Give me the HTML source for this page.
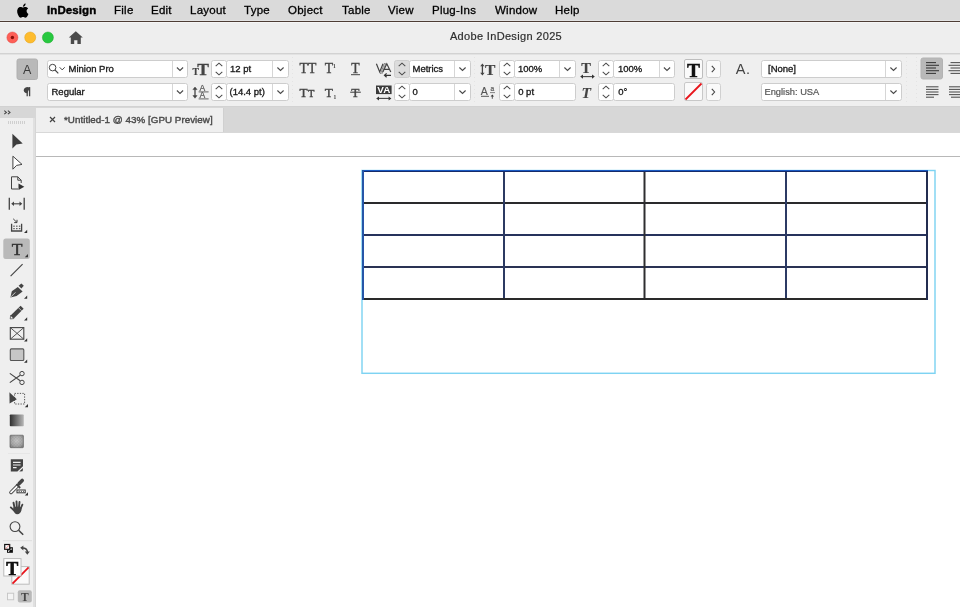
<!DOCTYPE html>
<html><head><meta charset="utf-8">
<style>
*{margin:0;padding:0;box-sizing:border-box}
html,body{width:960px;height:607px;overflow:hidden;background:#fff;font-family:"Liberation Sans",sans-serif;position:relative}
.a{position:absolute;will-change:transform}
#menubar{left:0;top:0;width:960px;height:21px;background:#dadada}
#menubar span{position:absolute;top:2.6px;font-size:11.5px;color:#000;line-height:14px;-webkit-text-stroke:0.3px #000;letter-spacing:0.25px}
#menubar span.b{-webkit-text-stroke:0.4px #000;letter-spacing:0.1px}
#brown{left:0;top:21px;width:960px;height:1px;background:#4e3d35;box-shadow:0 -1px 0 #e3e3e3,0 1px 0 #f6f6f6}
#titlebar{left:0;top:22px;width:960px;height:31px;background:#eeeeee}
#title{left:0;top:30px;width:1012px;text-align:center;font-size:11px;color:#2e2e2e;-webkit-text-stroke:0.2px #2e2e2e;letter-spacing:0.33px}
#sepline{left:0;top:53px;width:960px;height:1px;background:#d2d2d2;border-bottom:1px solid #e2e2e2;height:2px}
#ctrl{left:0;top:55px;width:960px;height:51px;background:#efefef}
#ctrlbot{left:0;top:106px;width:960px;height:1px;background:#d2d2d2}
#tabbar{left:0;top:107px;width:960px;height:26px;background:#d7d7d7}
#panelhdr{left:0;top:107px;width:35px;height:11px;background:#d7d7d7}
#tab{left:36px;top:108px;width:188px;height:24px;background:#efefef;border-right:1px solid #d0d0d0}
#tabtext{left:64px;top:114px;font-size:9.8px;color:#4a4a4a;-webkit-text-stroke:0.4px #4a4a4a;letter-spacing:0.03px}
#toolbar{left:0;top:118px;width:33px;height:489px;background:#efefef}
#tbborder{left:33px;top:118px;width:3px;height:489px;background:#e0e0e0;border-right:1px solid #d6d6d6}
#canvas{left:36px;top:133px;width:924px;height:474px;background:#fff}
#tabline{left:36px;top:132px;width:924px;height:1px;background:#d8d8d8}
#pageline{left:36px;top:156px;width:924px;height:1px;background:#b8b8b8}
</style></head><body>
<div class="a" id="menubar">
  <span class="b" style="left:47px;font-weight:bold">InDesign</span>
  <span style="left:114px">File</span>
  <span style="left:151px">Edit</span>
  <span style="left:190px">Layout</span>
  <span style="left:244px">Type</span>
  <span style="left:288px">Object</span>
  <span style="left:342px">Table</span>
  <span style="left:388px">View</span>
  <span style="left:432px">Plug-Ins</span>
  <span style="left:495px">Window</span>
  <span style="left:555px">Help</span>
</div>
<div class="a" id="titlebar"></div>
<div class="a" id="brown"></div>
<svg class="a" style="left:0;top:0" width="100" height="54" viewBox="0 0 100 54"><circle cx="12.4" cy="37.5" r="5.5" fill="#fe5f57" stroke="#e0443e" stroke-width="0.5"/><circle cx="12.4" cy="37.5" r="1.7" fill="#8a0f0a"/><circle cx="30.2" cy="37.5" r="5.5" fill="#febc2e" stroke="#e1a116" stroke-width="0.5"/><circle cx="47.9" cy="37.5" r="5.5" fill="#28c840" stroke="#1aab29" stroke-width="0.5"/><path d="M75.8,31.2 L68.8,37.6 L70.8,37.6 L70.8,44 L74.2,44 L74.2,40.2 L77.4,40.2 L77.4,44 L80.8,44 L80.8,37.6 L82.8,37.6 Z" fill="#4a4a4a"/><g transform="translate(15.2,2.2) scale(0.98)" fill="#000"><path d="M11.6,9.1 C11.6,7.3 13.1,6.4 13.2,6.4 C12.3,5.1 11,4.9 10.5,4.9 C9.4,4.8 8.4,5.5 7.8,5.5 C7.3,5.5 6.4,4.9 5.5,4.9 C4.3,4.9 3.2,5.6 2.6,6.7 C1.3,8.9 2.3,12.2 3.5,14 C4.1,14.9 4.8,15.8 5.7,15.8 C6.6,15.8 6.9,15.2 8,15.2 C9.1,15.2 9.4,15.8 10.3,15.8 C11.3,15.8 11.9,14.9 12.5,14 C13.2,13 13.5,12 13.5,12 C13.5,12 11.6,11.2 11.6,9.1 Z"/><path d="M9.9,3.6 C10.4,3 10.7,2.2 10.6,1.4 C9.9,1.4 9.1,1.9 8.6,2.5 C8.2,3 7.8,3.8 7.9,4.6 C8.7,4.6 9.4,4.2 9.9,3.6 Z"/></g></svg>
<div class="a" id="title">Adobe InDesign 2025</div>
<div class="a" id="sepline"></div>
<div class="a" id="ctrl"></div>
<div class="a" id="ctrlbot"></div>
<svg class="a" style="left:0;top:0" width="960" height="110" viewBox="0 0 960 110"><rect x="17" y="59" width="20.5" height="20.5" rx="2" fill="#b9b9b9" stroke="#b0b0b0" stroke-width="1"/><text x="27.2" y="74" text-anchor="middle" font-family='"Liberation Sans", sans-serif' font-size="12.5" fill="#3a3a3a">A</text><path d="M29.6,87.2 L29.6,96.2 M27.2,87.2 L27.2,96.2" stroke="#444" stroke-width="1.3"/><path d="M30.2,87.2 L27.2,87.2 C24.8,87.2 23.8,88.6 23.8,90.2 C23.8,91.8 24.8,93.2 27.2,93.2 Z" fill="#444"/><rect x="47.5" y="60.5" width="140.0" height="17.0" rx="2" fill="#fff" stroke="#cdcdcd" stroke-width="1"/><line x1="172.5" y1="61.0" x2="172.5" y2="77.0" stroke="#d6d6d6" stroke-width="1"/><path d="M176.9,67.5 L180.0,70.5 L183.1,67.5" fill="none" stroke="#4a4a4a" stroke-width="1.1"/><text x="68.5" y="71.8" font-family='"Liberation Sans", sans-serif' font-size="9.5" fill="#1a1a1a" stroke="#1a1a1a" stroke-width="0.33">Minion Pro</text><circle cx="52.6" cy="67.6" r="3.3" fill="none" stroke="#444" stroke-width="1"/><line x1="55" y1="70" x2="58.3" y2="73.3" stroke="#444" stroke-width="1.1"/><path d="M59.7,67.3 L62.2,69.89999999999999 L64.7,67.3" fill="none" stroke="#444" stroke-width="1"/><rect x="47.5" y="83.5" width="140.0" height="17.0" rx="2" fill="#fff" stroke="#cdcdcd" stroke-width="1"/><line x1="172.5" y1="84.0" x2="172.5" y2="100.0" stroke="#d6d6d6" stroke-width="1"/><path d="M176.9,90.5 L180.0,93.5 L183.1,90.5" fill="none" stroke="#4a4a4a" stroke-width="1.1"/><text x="51.5" y="94.8" font-family='"Liberation Sans", sans-serif' font-size="9.5" fill="#1a1a1a" stroke="#1a1a1a" stroke-width="0.33">Regular</text><text x="192.6" y="75.2" font-family='"Liberation Serif", serif' font-size="9.6" font-weight="bold" fill="#444" stroke="#444" stroke-width="0.2">T</text><text x="197.2" y="75.2" font-family='"Liberation Serif", serif' font-size="17.5" font-weight="bold" fill="#444" stroke="#444" stroke-width="0.3">T</text><rect x="211.5" y="60.5" width="15.0" height="17.0" rx="2" fill="#fff" stroke="#cdcdcd" stroke-width="1"/><path d="M215.7,66.05 L219.0,63.14999999999999 L222.3,66.05" fill="none" stroke="#4a4a4a" stroke-width="1.05"/><path d="M215.7,71.95 L219.0,74.85000000000001 L222.3,71.95" fill="none" stroke="#4a4a4a" stroke-width="1.05"/><rect x="226.5" y="60.5" width="62.0" height="17.0" rx="2" fill="#fff" stroke="#cdcdcd" stroke-width="1"/><line x1="272.5" y1="61.0" x2="272.5" y2="77.0" stroke="#d6d6d6" stroke-width="1"/><path d="M277.4,67.5 L280.5,70.5 L283.6,67.5" fill="none" stroke="#4a4a4a" stroke-width="1.1"/><text x="230" y="71.8" font-family='"Liberation Sans", sans-serif' font-size="9.5" fill="#1a1a1a" stroke="#1a1a1a" stroke-width="0.33">12 pt</text><path d="M195,88.6 L195,96.6" stroke="#444" stroke-width="1.3"/><path d="M192.9,89.6 L195,87 L197.1,89.6 Z M192.9,95.6 L195,98.2 L197.1,95.6 Z" fill="#444" stroke="#444" stroke-width="0.5"/><text x="199.6" y="91.2" font-family='"Liberation Sans", sans-serif' font-size="8.6" fill="#555" stroke="#555" stroke-width="0.2">A</text><text x="199.6" y="98.2" font-family='"Liberation Sans", sans-serif' font-size="8.6" fill="#555" stroke="#555" stroke-width="0.2">A</text><line x1="198.6" y1="91.9" x2="208.6" y2="91.9" stroke="#555" stroke-width="0.9"/><line x1="198.6" y1="98.9" x2="208.6" y2="98.9" stroke="#555" stroke-width="0.9"/><rect x="211.5" y="83.5" width="15.0" height="17.0" rx="2" fill="#fff" stroke="#cdcdcd" stroke-width="1"/><path d="M215.7,89.05 L219.0,86.14999999999999 L222.3,89.05" fill="none" stroke="#4a4a4a" stroke-width="1.05"/><path d="M215.7,94.95 L219.0,97.85000000000001 L222.3,94.95" fill="none" stroke="#4a4a4a" stroke-width="1.05"/><rect x="226.5" y="83.5" width="62.0" height="17.0" rx="2" fill="#fff" stroke="#cdcdcd" stroke-width="1"/><line x1="272.5" y1="84.0" x2="272.5" y2="100.0" stroke="#d6d6d6" stroke-width="1"/><path d="M277.4,90.5 L280.5,93.5 L283.6,90.5" fill="none" stroke="#4a4a4a" stroke-width="1.1"/><text x="229.5" y="94.8" font-family='"Liberation Sans", sans-serif' font-size="9.5" fill="#1a1a1a" stroke="#1a1a1a" stroke-width="0.33">(14.4 pt)</text><line x1="292.5" y1="57" x2="292.5" y2="103" stroke="#e4e4e4" stroke-width="1" stroke-dasharray="1,3"/><line x1="474.5" y1="57" x2="474.5" y2="103" stroke="#e4e4e4" stroke-width="1" stroke-dasharray="1,3"/><line x1="906.5" y1="57" x2="906.5" y2="103" stroke="#e4e4e4" stroke-width="1" stroke-dasharray="1,3"/><line x1="916.5" y1="57" x2="916.5" y2="103" stroke="#e4e4e4" stroke-width="1" stroke-dasharray="1,3"/><text x="299.6" y="72.9" font-family='"Liberation Serif", serif' font-size="13.7" font-weight="normal" fill="#444" stroke="#444" stroke-width="0.35">T</text><text x="307.9" y="72.9" font-family='"Liberation Serif", serif' font-size="13.7" font-weight="normal" fill="#444" stroke="#444" stroke-width="0.35">T</text><text x="324.8" y="72.9" font-family='"Liberation Serif", serif' font-size="13.7" font-weight="normal" fill="#444" stroke="#444" stroke-width="0.35">T</text><text x="333" y="67.6" font-family='"Liberation Serif", serif' font-size="5.5" font-weight="bold" fill="#444">1</text><text x="351.2" y="72.9" font-family='"Liberation Serif", serif' font-size="13.7" font-weight="normal" fill="#444" stroke="#444" stroke-width="0.35">T</text><line x1="351" y1="74.7" x2="360" y2="74.7" stroke="#444" stroke-width="1"/><text x="299.6" y="96.6" font-family='"Liberation Serif", serif' font-size="13.3" font-weight="normal" fill="#444" stroke="#444" stroke-width="0.35">T</text><text x="308.2" y="96.6" font-family='"Liberation Serif", serif' font-size="10" font-weight="normal" fill="#444" stroke="#444" stroke-width="0.45">T</text><text x="324.8" y="96.6" font-family='"Liberation Serif", serif' font-size="13.3" font-weight="normal" fill="#444" stroke="#444" stroke-width="0.35">T</text><text x="333.5" y="98.5" font-family='"Liberation Serif", serif' font-size="5.5" font-weight="bold" fill="#444">1</text><text x="351.2" y="96.9" font-family='"Liberation Serif", serif' font-size="13.3" font-weight="normal" fill="#444" stroke="#444" stroke-width="0.35">T</text><line x1="350.2" y1="92.2" x2="360.8" y2="92.2" stroke="#444" stroke-width="1.1"/><path d="M376.4,63.8 L379.7,72 L383,63.8 M382.8,72 L386.8,63.8 L390.8,72 M384.2,69.4 L389.4,69.4" fill="none" stroke="#444" stroke-width="1.2"/><path d="M384.6,63 L380.4,74 M386,63 L381.8,74" fill="none" stroke="#555" stroke-width="0.7"/><path d="M391,75.3 L384.5,75.3 M386.6,73.4 L384.5,75.3 L386.6,77.2" fill="none" stroke="#333" stroke-width="1.2"/><rect x="394.5" y="60.5" width="15.0" height="17.0" rx="2" fill="#dcdcdc" stroke="#cdcdcd" stroke-width="1"/><path d="M398.7,66.05 L402.0,63.14999999999999 L405.3,66.05" fill="none" stroke="#4a4a4a" stroke-width="1.05"/><path d="M398.7,71.95 L402.0,74.85000000000001 L405.3,71.95" fill="none" stroke="#4a4a4a" stroke-width="1.05"/><rect x="409.5" y="60.5" width="61.0" height="17.0" rx="2" fill="#fff" stroke="#cdcdcd" stroke-width="1"/><line x1="454.5" y1="61.0" x2="454.5" y2="77.0" stroke="#d6d6d6" stroke-width="1"/><path d="M459.4,67.5 L462.5,70.5 L465.6,67.5" fill="none" stroke="#4a4a4a" stroke-width="1.1"/><text x="412.5" y="71.8" font-family='"Liberation Sans", sans-serif' font-size="9.5" fill="#1a1a1a" stroke="#1a1a1a" stroke-width="0.33">Metrics</text><rect x="376" y="85.5" width="15.6" height="8.6" fill="#3a3a3a"/><text x="383.8" y="93.3" text-anchor="middle" font-family='"Liberation Sans", sans-serif' font-size="9.5" font-weight="bold" fill="#fff" textLength="13" lengthAdjust="spacingAndGlyphs">VA</text><path d="M378,98.4 L389.6,98.4" stroke="#444" stroke-width="1.1"/><path d="M376.2,98.4 L379,96.4 L379,100.4 Z M391.4,98.4 L388.6,96.4 L388.6,100.4 Z" fill="#333"/><rect x="394.5" y="83.5" width="15.0" height="17.0" rx="2" fill="#fff" stroke="#cdcdcd" stroke-width="1"/><path d="M398.7,89.05 L402.0,86.14999999999999 L405.3,89.05" fill="none" stroke="#4a4a4a" stroke-width="1.05"/><path d="M398.7,94.95 L402.0,97.85000000000001 L405.3,94.95" fill="none" stroke="#4a4a4a" stroke-width="1.05"/><rect x="409.5" y="83.5" width="61.0" height="17.0" rx="2" fill="#fff" stroke="#cdcdcd" stroke-width="1"/><line x1="454.5" y1="84.0" x2="454.5" y2="100.0" stroke="#d6d6d6" stroke-width="1"/><path d="M459.4,90.5 L462.5,93.5 L465.6,90.5" fill="none" stroke="#4a4a4a" stroke-width="1.1"/><text x="412.5" y="94.8" font-family='"Liberation Sans", sans-serif' font-size="9.5" fill="#1a1a1a" stroke="#1a1a1a" stroke-width="0.33">0</text><path d="M482.4,65.5 L482.4,73.5" stroke="#444" stroke-width="1.3"/><path d="M480.2,66.2 L482.4,63.4 L484.6,66.2 Z M480.2,72.8 L482.4,75.6 L484.6,72.8 Z" fill="#444"/><text x="485" y="75.3" font-family='"Liberation Serif", serif' font-size="15.5" font-weight="bold" fill="#444" stroke="#444" stroke-width="0.2">T</text><rect x="499.5" y="60.5" width="15.0" height="17.0" rx="2" fill="#fff" stroke="#cdcdcd" stroke-width="1"/><path d="M503.7,66.05 L507.0,63.14999999999999 L510.3,66.05" fill="none" stroke="#4a4a4a" stroke-width="1.05"/><path d="M503.7,71.95 L507.0,74.85000000000001 L510.3,71.95" fill="none" stroke="#4a4a4a" stroke-width="1.05"/><rect x="514.5" y="60.5" width="61.0" height="17.0" rx="2" fill="#fff" stroke="#cdcdcd" stroke-width="1"/><line x1="559.5" y1="61.0" x2="559.5" y2="77.0" stroke="#d6d6d6" stroke-width="1"/><path d="M564.4,67.5 L567.5,70.5 L570.6,67.5" fill="none" stroke="#4a4a4a" stroke-width="1.1"/><text x="518" y="71.8" font-family='"Liberation Sans", sans-serif' font-size="9.5" fill="#1a1a1a" stroke="#1a1a1a" stroke-width="0.33">100%</text><text x="480.8" y="94.7" font-family='"Liberation Sans", sans-serif' font-size="10.5" fill="#555" stroke="#555" stroke-width="0.15">A</text><line x1="481" y1="96.3" x2="489" y2="96.3" stroke="#555" stroke-width="1"/><text x="490.4" y="91.1" font-family='"Liberation Sans", sans-serif' font-size="6.5" fill="#555" stroke="#555" stroke-width="0.2">a</text><line x1="490" y1="92.6" x2="495" y2="92.6" stroke="#666" stroke-width="0.8"/><path d="M492.3,98.8 L492.3,96" stroke="#444" stroke-width="0.9"/><path d="M490.6,96.6 L492.3,94.4 L494,96.6 Z" fill="#333"/><rect x="499.5" y="83.5" width="15.0" height="17.0" rx="2" fill="#fff" stroke="#cdcdcd" stroke-width="1"/><path d="M503.7,89.05 L507.0,86.14999999999999 L510.3,89.05" fill="none" stroke="#4a4a4a" stroke-width="1.05"/><path d="M503.7,94.95 L507.0,97.85000000000001 L510.3,94.95" fill="none" stroke="#4a4a4a" stroke-width="1.05"/><rect x="514.5" y="83.5" width="61.0" height="17.0" rx="2" fill="#fff" stroke="#cdcdcd" stroke-width="1"/><text x="518.2" y="94.8" font-family='"Liberation Sans", sans-serif' font-size="9.5" fill="#1a1a1a" stroke="#1a1a1a" stroke-width="0.33">0 pt</text><text x="581.2" y="73.4" font-family='"Liberation Serif", serif' font-size="14.5" font-weight="bold" fill="#444" stroke="#444" stroke-width="0.2">T</text><path d="M582,76.6 L593,76.6" stroke="#444" stroke-width="1.1"/><path d="M580.2,76.6 L583,74.5 L583,78.7 Z M594.8,76.6 L592,74.5 L592,78.7 Z" fill="#333"/><rect x="598.5" y="60.5" width="15.0" height="17.0" rx="2" fill="#fff" stroke="#cdcdcd" stroke-width="1"/><path d="M602.7,66.05 L606.0,63.14999999999999 L609.3,66.05" fill="none" stroke="#4a4a4a" stroke-width="1.05"/><path d="M602.7,71.95 L606.0,74.85000000000001 L609.3,71.95" fill="none" stroke="#4a4a4a" stroke-width="1.05"/><rect x="613.5" y="60.5" width="61.0" height="17.0" rx="2" fill="#fff" stroke="#cdcdcd" stroke-width="1"/><line x1="659.5" y1="61.0" x2="659.5" y2="77.0" stroke="#d6d6d6" stroke-width="1"/><path d="M663.9,67.5 L667.0,70.5 L670.1,67.5" fill="none" stroke="#4a4a4a" stroke-width="1.1"/><text x="618" y="71.8" font-family='"Liberation Sans", sans-serif' font-size="9.5" fill="#1a1a1a" stroke="#1a1a1a" stroke-width="0.33">100%</text><text x="581.5" y="97.5" font-family='"Liberation Serif", serif' font-size="15.5" font-style="italic" font-weight="bold" fill="#444" stroke="#444" stroke-width="0.1">T</text><rect x="598.5" y="83.5" width="15.0" height="17.0" rx="2" fill="#fff" stroke="#cdcdcd" stroke-width="1"/><path d="M602.7,89.05 L606.0,86.14999999999999 L609.3,89.05" fill="none" stroke="#4a4a4a" stroke-width="1.05"/><path d="M602.7,94.95 L606.0,97.85000000000001 L609.3,94.95" fill="none" stroke="#4a4a4a" stroke-width="1.05"/><rect x="613.5" y="83.5" width="61.0" height="17.0" rx="2" fill="#fff" stroke="#cdcdcd" stroke-width="1"/><text x="618.2" y="94.8" font-family='"Liberation Sans", sans-serif' font-size="9.5" fill="#1a1a1a" stroke="#1a1a1a" stroke-width="0.33">0&#176;</text><rect x="684.5" y="59.5" width="18.0" height="19.0" rx="1.5" fill="#fafafa" stroke="#bdbdbd" stroke-width="1"/><text x="693.6" y="77" text-anchor="middle" font-family='"Liberation Serif", serif' font-size="19.5" font-weight="bold" fill="#111" stroke="#111" stroke-width="0.5">T</text><rect x="684.5" y="82.5" width="18.0" height="18.0" rx="1.5" fill="#fafafa" stroke="#c8c8c8" stroke-width="1"/><line x1="685.5" y1="99.5" x2="701.5" y2="83.5" stroke="#e8141b" stroke-width="1.8"/><rect x="706.5" y="60.5" width="14.0" height="17.0" rx="2" fill="#fafafa" stroke="#d0d0d0" stroke-width="1"/><path d="M711.8,65.8 L714.6,69.0 L711.8,72.2" fill="none" stroke="#444" stroke-width="1.1"/><rect x="706.5" y="83.5" width="14.0" height="17.0" rx="2" fill="#fafafa" stroke="#d0d0d0" stroke-width="1"/><path d="M711.8,88.8 L714.6,92.0 L711.8,95.2" fill="none" stroke="#444" stroke-width="1.1"/><text x="735.8" y="74" font-family='"Liberation Sans", sans-serif' font-size="14.5" fill="#444" letter-spacing="0.5">A.</text><rect x="761.5" y="60.5" width="140.0" height="17.0" rx="2" fill="#fff" stroke="#cdcdcd" stroke-width="1"/><line x1="885.5" y1="61.0" x2="885.5" y2="77.0" stroke="#d6d6d6" stroke-width="1"/><path d="M890.4,67.5 L893.5,70.5 L896.6,67.5" fill="none" stroke="#4a4a4a" stroke-width="1.1"/><text x="768" y="71.8" font-family='"Liberation Sans", sans-serif' font-size="9.5" fill="#1a1a1a" stroke="#1a1a1a" stroke-width="0.33">[None]</text><rect x="761.5" y="83.5" width="140.0" height="17.0" rx="2" fill="#fff" stroke="#cdcdcd" stroke-width="1"/><line x1="885.5" y1="84.0" x2="885.5" y2="100.0" stroke="#d6d6d6" stroke-width="1"/><path d="M890.4,90.5 L893.5,93.5 L896.6,90.5" fill="none" stroke="#4a4a4a" stroke-width="1.1"/><text x="764.5" y="94.8" font-family='"Liberation Sans", sans-serif' font-size="9.3" fill="#555" stroke="#555" stroke-width="0.2">English: USA</text><rect x="921" y="58" width="21.5" height="21" rx="2" fill="#b9b9b9" stroke="#b3b3b3" stroke-width="1"/><line x1="926" y1="62.6" x2="936" y2="62.6" stroke="#3a3a3a" stroke-width="1.1"/><line x1="950.5" y1="62.6" x2="960" y2="62.6" stroke="#555" stroke-width="1.1"/><line x1="926" y1="65.3" x2="939" y2="65.3" stroke="#3a3a3a" stroke-width="1.1"/><line x1="948.5" y1="65.3" x2="960" y2="65.3" stroke="#555" stroke-width="1.1"/><line x1="926" y1="68" x2="936" y2="68" stroke="#3a3a3a" stroke-width="1.1"/><line x1="950.5" y1="68" x2="960" y2="68" stroke="#555" stroke-width="1.1"/><line x1="926" y1="70.7" x2="939" y2="70.7" stroke="#3a3a3a" stroke-width="1.1"/><line x1="948.5" y1="70.7" x2="960" y2="70.7" stroke="#555" stroke-width="1.1"/><line x1="926" y1="73.4" x2="936" y2="73.4" stroke="#3a3a3a" stroke-width="1.1"/><line x1="950.5" y1="73.4" x2="960" y2="73.4" stroke="#555" stroke-width="1.1"/><line x1="926" y1="86.8" x2="938.5" y2="86.8" stroke="#555" stroke-width="1.1"/><line x1="949" y1="86.8" x2="960" y2="86.8" stroke="#555" stroke-width="1.1"/><line x1="926" y1="89.4" x2="938.5" y2="89.4" stroke="#555" stroke-width="1.1"/><line x1="949" y1="89.4" x2="960" y2="89.4" stroke="#555" stroke-width="1.1"/><line x1="926" y1="92" x2="938.5" y2="92" stroke="#555" stroke-width="1.1"/><line x1="949" y1="92" x2="960" y2="92" stroke="#555" stroke-width="1.1"/><line x1="926" y1="94.6" x2="938.5" y2="94.6" stroke="#555" stroke-width="1.1"/><line x1="949" y1="94.6" x2="960" y2="94.6" stroke="#555" stroke-width="1.1"/><line x1="926" y1="97.2" x2="934" y2="97.2" stroke="#555" stroke-width="1.1"/><line x1="951" y1="97.2" x2="960" y2="97.2" stroke="#555" stroke-width="1.1"/></svg>
<div class="a" id="tabbar"></div>
<div class="a" id="tab"></div>
<svg class="a" style="left:48px;top:115px" width="10" height="10" viewBox="0 0 10 10"><path d="M2,2 L7,7 M7,2 L2,7" stroke="#444" stroke-width="1.2"/></svg>
<div class="a" id="tabtext">*Untitled-1 @ 43% [GPU Preview]</div>
<div class="a" id="toolbar"></div>
<div class="a" id="tbborder"></div>
<div class="a" id="canvas"></div>
<div class="a" id="tabline"></div>
<div class="a" id="pageline"></div>
<svg class="a" style="left:0;top:0" width="960" height="607" viewBox="0 0 960 607"><rect x="362" y="170.5" width="573" height="202.8" fill="none" stroke="#7ed3f2" stroke-width="1.45"/><line x1="363" y1="203" x2="927" y2="203" stroke="#2a2a2c" stroke-width="2"/><line x1="363" y1="235" x2="927" y2="235" stroke="#26325c" stroke-width="2"/><line x1="363" y1="267" x2="927" y2="267" stroke="#2a3254" stroke-width="2"/><line x1="504" y1="171" x2="504" y2="300" stroke="#2c3a62" stroke-width="2"/><line x1="644.5" y1="171" x2="644.5" y2="300" stroke="#2e2e30" stroke-width="2"/><line x1="786" y1="171" x2="786" y2="300" stroke="#2c3a64" stroke-width="2"/><line x1="362" y1="299" x2="928" y2="299" stroke="#2a2a2a" stroke-width="2"/><line x1="927" y1="170" x2="927" y2="300" stroke="#232d50" stroke-width="2"/><line x1="362" y1="170.5" x2="928" y2="170.5" stroke="#1a5ac4" stroke-width="1"/><line x1="362" y1="171.5" x2="928" y2="171.5" stroke="#162c6a" stroke-width="1"/><line x1="363" y1="170" x2="363" y2="300" stroke="#2656a8" stroke-width="2"/></svg>
<svg class="a" style="left:0;top:0" width="40" height="607" viewBox="0 0 40 607"><path d="M4.3,110.6 L6.4,112.4 L4.3,114.2 M7.9,110.6 L10,112.4 L7.9,114.2" fill="none" stroke="#444" stroke-width="1.1"/><rect x="8" y="121" width="1" height="3" fill="#cfcfcf"/><rect x="10" y="121" width="1" height="3" fill="#cfcfcf"/><rect x="12" y="121" width="1" height="3" fill="#cfcfcf"/><rect x="14" y="121" width="1" height="3" fill="#cfcfcf"/><rect x="16" y="121" width="1" height="3" fill="#cfcfcf"/><rect x="18" y="121" width="1" height="3" fill="#cfcfcf"/><rect x="20" y="121" width="1" height="3" fill="#cfcfcf"/><rect x="22" y="121" width="1" height="3" fill="#cfcfcf"/><rect x="24" y="121" width="1" height="3" fill="#cfcfcf"/><path d="M12.4,133.8 L22.7,143.4 L16.4,144.6 L12.4,148.4 Z" fill="#3d3d3d"/><path d="M12.9,156.2 L22,164.4 L16.6,165.4 L12.9,169.2 Z" fill="#fff" stroke="#444" stroke-width="1"/><path d="M11.5,176.8 L17.8,176.8 L21.2,180.2 L21.2,183 M11.5,176.8 L11.5,189 L18,189 M17.8,176.8 L17.8,180.2 L21.2,180.2" fill="none" stroke="#444" stroke-width="1"/><path d="M18.5,183.5 L24.3,186.8 L18.5,190 Z" fill="#333"/><path d="M9.3,197.8 L9.3,209.8 M24.2,197.8 L24.2,209.8" stroke="#444" stroke-width="1.3"/><path d="M13,203.8 L20.5,203.8" stroke="#444" stroke-width="1.1"/><path d="M11.2,203.8 L14,201.6 L14,206 Z M22.3,203.8 L19.5,201.6 L19.5,206 Z" fill="#444"/><path d="M11.6,223.8 L11.6,231 L21.6,231 L21.6,223.8" fill="none" stroke="#444" stroke-width="1.3"/><path d="M13.2,218.8 L17,222.5 M17,219.8 L17,222.6 L14.2,222.6" fill="none" stroke="#444" stroke-width="1"/><rect x="13.3" y="225.6" width="1.4" height="1.2" fill="#555"/><rect x="16.1" y="225.6" width="1.4" height="1.2" fill="#555"/><rect x="18.900000000000002" y="225.6" width="1.4" height="1.2" fill="#555"/><rect x="13.3" y="228.0" width="1.4" height="1.2" fill="#555"/><rect x="16.1" y="228.0" width="1.4" height="1.2" fill="#555"/><rect x="18.900000000000002" y="228.0" width="1.4" height="1.2" fill="#555"/><path d="M27.2,229.8 L27.2,233 L24.0,233 Z" fill="#333"/><rect x="3.3" y="238.5" width="26.5" height="20.6" rx="2.5" fill="#b9b9b9"/><text x="17" y="254.9" text-anchor="middle" font-family='"Liberation Serif", serif' font-size="17.5" fill="#333" stroke="#333" stroke-width="0.5">T</text><path d="M28,254.0 L28,257.2 L24.8,257.2 Z" fill="#333"/><line x1="10.6" y1="276.2" x2="22.6" y2="264.2" stroke="#444" stroke-width="1.2"/><path d="M18.6,285.8 L21.4,283.4 L23.8,285.8 L21.4,288.6 Z" fill="#444"/><path d="M17.8,287 L22.6,291.4 L16.6,296 L10.4,297.4 L11.8,291.2 Z" fill="#444"/><line x1="10.9" y1="296.9" x2="15.4" y2="292.4" stroke="#efefef" stroke-width="0.8"/><path d="M27.2,295.6 L27.2,298.8 L24.0,298.8 Z" fill="#333"/><path d="M20.6,305.8 L23.6,308.8 L13.8,318.6 L10.2,319 L10.6,315.4 Z" fill="#444"/><path d="M10.6,315.4 L10.2,319 L13.8,318.6 Z" fill="#efefef" stroke="#444" stroke-width="0.6"/><line x1="18.6" y1="307.8" x2="21.6" y2="310.8" stroke="#efefef" stroke-width="0.7"/><path d="M27.2,317.3 L27.2,320.5 L24.0,320.5 Z" fill="#333"/><rect x="10.3" y="327.6" width="13.5" height="11.6" fill="none" stroke="#444" stroke-width="1.1"/><path d="M10.3,327.6 L23.8,339.2 M23.8,327.6 L10.3,339.2" stroke="#444" stroke-width="0.9"/><path d="M27.2,338.3 L27.2,341.5 L24.0,341.5 Z" fill="#333"/><rect x="10.3" y="348.9" width="13.5" height="11.6" rx="1" fill="#c6c6c6" stroke="#555" stroke-width="1.1"/><path d="M27.2,359.6 L27.2,362.8 L24.0,362.8 Z" fill="#333"/><circle cx="22" cy="373.6" r="2.2" fill="none" stroke="#444" stroke-width="1"/><circle cx="22" cy="382.4" r="2.2" fill="none" stroke="#444" stroke-width="1"/><path d="M9.8,373.4 L20.2,380.8 M9.8,382.6 L20.2,375.2" stroke="#444" stroke-width="1.1"/><path d="M9.4,392.2 L16.8,399.2 L9.6,403.4 Z" fill="#444"/><rect x="14.6" y="393.4" width="10" height="10.6" fill="none" stroke="#444" stroke-width="0.9" stroke-dasharray="1.3,1.3"/><path d="M28,404.0 L28,407.2 L24.8,407.2 Z" fill="#333"/><defs><linearGradient id="g1" x1="0" x2="1"><stop offset="0" stop-color="#2e2e2e"/><stop offset="1" stop-color="#b8b8b8"/></linearGradient><linearGradient id="g2" x1="0" x2="0" y1="0" y2="1"><stop offset="0" stop-color="#8c8c8c"/><stop offset="1" stop-color="#5c5c5c"/></linearGradient><pattern id="chk" width="3" height="3" patternUnits="userSpaceOnUse"><rect width="3" height="3" fill="#9a9a9a"/><rect width="1.5" height="1.5" fill="#c8c8c8"/><rect x="1.5" y="1.5" width="1.5" height="1.5" fill="#c8c8c8"/></pattern></defs><rect x="9.8" y="414.5" width="14" height="11.8" rx="0.8" fill="url(#g1)"/><defs><radialGradient id="rg" cx="0.5" cy="0.45" r="0.7"><stop offset="0" stop-color="#c4c4c4"/><stop offset="0.6" stop-color="#9c9c9c"/><stop offset="1" stop-color="#5e5e5e"/></radialGradient></defs><rect x="10" y="435.2" width="13.4" height="12.5" rx="0.8" fill="url(#rg)"/><rect x="10" y="435.2" width="13.4" height="12.5" rx="0.8" fill="url(#chk)" opacity="0.25"/><rect x="10" y="435.2" width="13.4" height="12.5" rx="0.8" fill="none" stroke="#666" stroke-width="0.7"/><line x1="8" y1="453.5" x2="30" y2="453.5" stroke="#e6e6e6" stroke-width="1"/><path d="M10.8,459.3 L23,459.3 L23,466.3 L17.4,471.6 L10.8,471.6 Z" fill="#444"/><path d="M13,462.4 L20.6,462.4 M13,465 L20.6,465 M13,467.6 L16.6,467.6" stroke="#ededed" stroke-width="1.1"/><path d="M19.3,471.6 L23,468.1 L22.6,471.2 Z" fill="#3a3a3a"/><line x1="11" y1="492.4" x2="17.6" y2="485.8" stroke="#444" stroke-width="3.6" stroke-linecap="round"/><line x1="11" y1="492.4" x2="17.6" y2="485.8" stroke="#fafafa" stroke-width="1.8" stroke-linecap="round"/><line x1="16.4" y1="484.2" x2="20.2" y2="488" stroke="#444" stroke-width="1.8"/><line x1="19.2" y1="483.4" x2="22.2" y2="480.4" stroke="#444" stroke-width="3.6" stroke-linecap="round"/><rect x="17" y="490" width="8.2" height="2.8" fill="#fff" stroke="#333" stroke-width="1"/><path d="M18.6,491.4 L19.8,491.4 M20.8,491.4 L22,491.4 M23,491.4 L24,491.4" stroke="#444" stroke-width="0.9"/><path d="M28,492.2 L28,495.4 L24.8,495.4 Z" fill="#333"/><g stroke="#444" stroke-linecap="round" fill="none"><line x1="14.6" y1="508" x2="13.5" y2="502.8" stroke-width="1.9"/><line x1="16.8" y1="507" x2="16.5" y2="501.4" stroke-width="1.9"/><line x1="19" y1="507" x2="19.5" y2="502" stroke-width="1.9"/><line x1="20.6" y1="508.6" x2="22.4" y2="504.6" stroke-width="1.8"/><line x1="14.2" y1="510.6" x2="10.8" y2="507.4" stroke-width="1.9"/></g><path d="M13.2,508 C13.2,506.4 21.6,506.4 21.6,508.4 C21.6,511.6 20,514.2 17.2,514.2 C14.8,514.2 13.2,511.6 13.2,508 Z" fill="#444"/><circle cx="15" cy="526.6" r="4.9" fill="none" stroke="#444" stroke-width="1.1"/><line x1="18.6" y1="530.2" x2="23.2" y2="534.8" stroke="#444" stroke-width="1.6"/><line x1="3" y1="540.7" x2="32" y2="540.7" stroke="#dedede" stroke-width="1"/><rect x="7" y="547.2" width="5.9" height="5.6" fill="#111"/><path d="M8.6,552 C8.6,550 10,549 12,549" fill="none" stroke="#fff" stroke-width="1"/><rect x="4.7" y="544.5" width="5" height="4.8" fill="#fff" stroke="#111" stroke-width="1.2"/><line x1="5.2" y1="549" x2="9.4" y2="545" stroke="#e66" stroke-width="0.7"/><path d="M22.4,548 C25.4,548 27.4,549.6 27.4,552.4" fill="none" stroke="#444" stroke-width="1.5"/><path d="M20.2,547.8 L23.4,545.4 L23.4,550.4 Z" fill="#444"/><path d="M24.8,551.4 L29.8,551.4 L27.3,554.8 Z" fill="#444"/><rect x="11.8" y="566.6" width="17.4" height="17.6" fill="#fafafa" stroke="#bcbcbc" stroke-width="1"/><line x1="12.5" y1="583.6" x2="28.6" y2="567.4" stroke="#e8141b" stroke-width="1.8"/><rect x="3.8" y="558.6" width="17.2" height="17.4" fill="#fff" stroke="#bcbcbc" stroke-width="1"/><text x="12.2" y="575" text-anchor="middle" font-family='"Liberation Serif", serif' font-size="18" font-weight="bold" fill="#111" stroke="#111" stroke-width="0.7">T</text><rect x="7.5" y="593.2" width="6.2" height="6.6" fill="#f4f4f4" stroke="#c4c4c4" stroke-width="0.9"/><rect x="17.8" y="590.3" width="14" height="12.2" rx="2" fill="#b9b9b9"/><text x="24.8" y="600.6" text-anchor="middle" font-family='"Liberation Serif", serif' font-size="11.5" font-weight="bold" fill="#444">T</text></svg>
</body></html>
